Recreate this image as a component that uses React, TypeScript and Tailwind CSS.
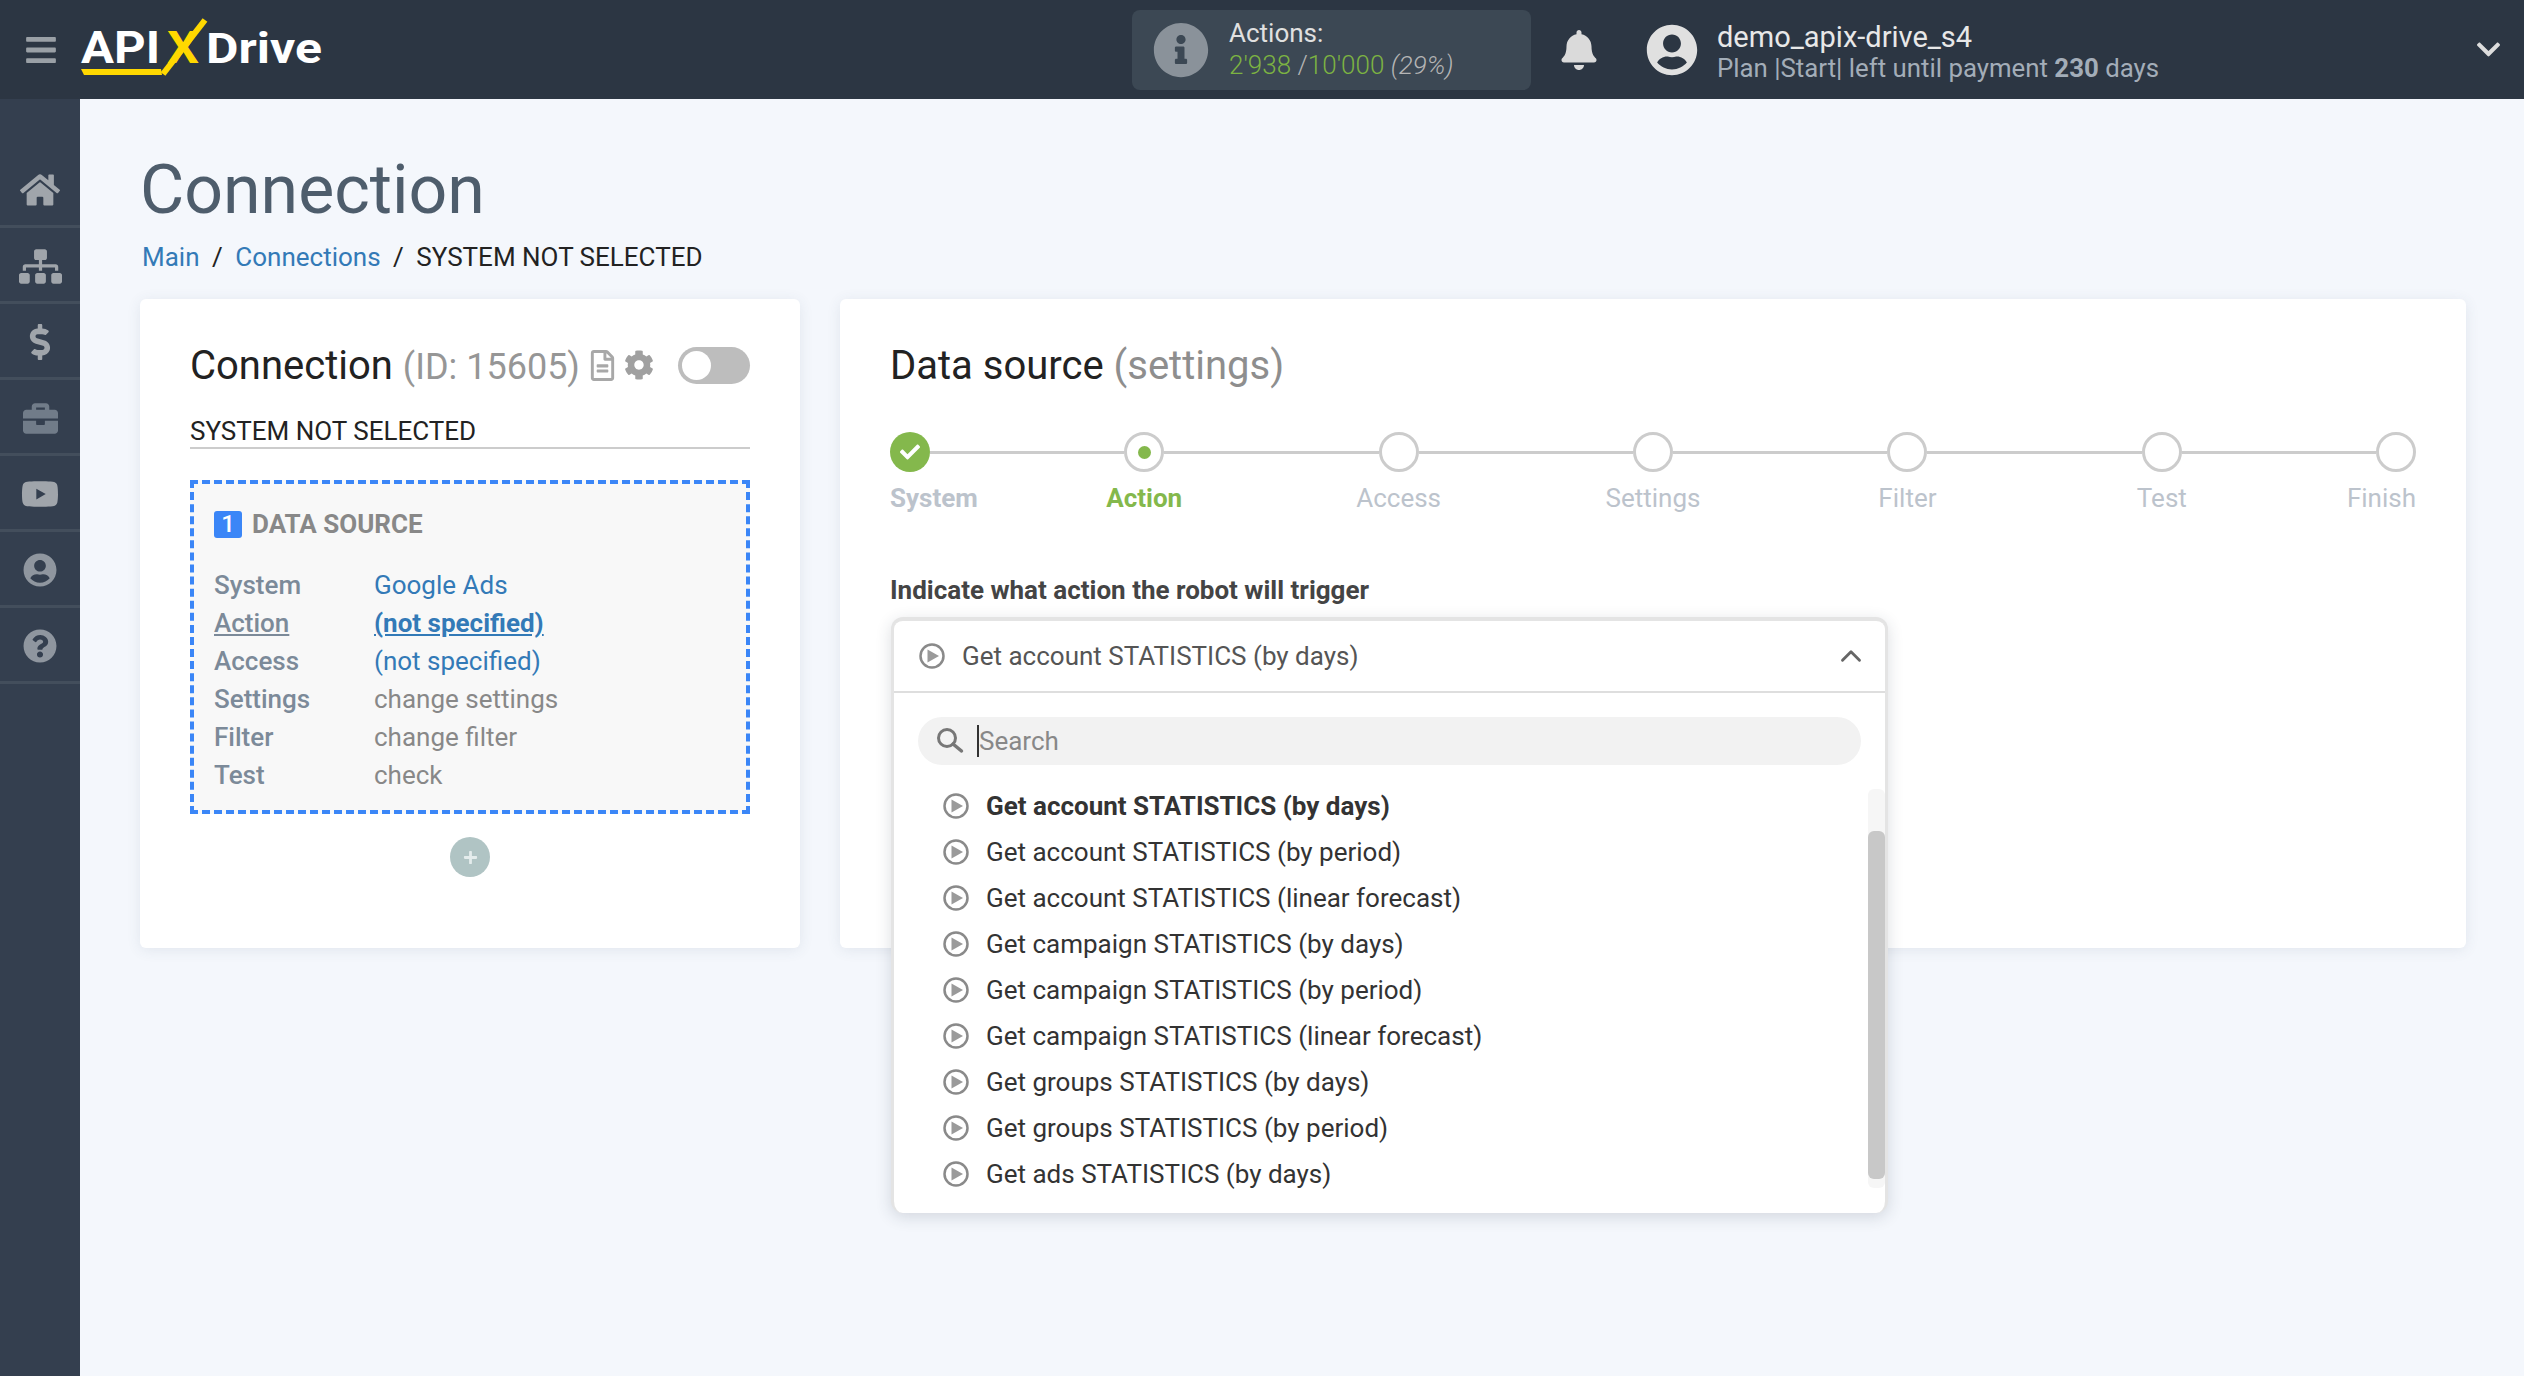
import React from "react";
import {
  FaBars,
  FaBell,
  FaBriefcase,
  FaCheck,
  FaChevronDown,
  FaCog,
  FaDollarSign,
  FaHome,
  FaInfoCircle,
  FaPlus,
  FaQuestionCircle,
  FaRegFileAlt,
  FaSitemap,
  FaUserCircle,
  FaYoutube,
} from "react-icons/fa";
import { ChevronUp } from "lucide-react";

const NAV_ITEMS = [
  { icon: FaHome, size: 40, color: "text-[#a0a5ab]" },
  { icon: FaSitemap, size: 43, color: "text-[#a0a5ab]" },
  { icon: FaDollarSign, size: 36, color: "text-[#a0a5ab]" },
  { icon: FaBriefcase, size: 35, color: "text-[#717c89]" },
  { icon: FaYoutube, size: 38, color: "text-[#a0a5ab]" },
  { icon: FaUserCircle, size: 34, color: "text-[#8f969f]" },
  { icon: FaQuestionCircle, size: 34, color: "text-[#8f969f]" },
];

const STEPS = ["System", "Action", "Access", "Settings", "Filter", "Test", "Finish"];

const SOURCE_ROWS = [
  { label: "System", value: "Google Ads", labelClass: "", valueClass: "text-[#337ab7]" },
  { label: "Action", value: "(not specified)", labelClass: "underline", valueClass: "text-[#337ab7] font-bold underline" },
  { label: "Access", value: "(not specified)", labelClass: "", valueClass: "text-[#337ab7]" },
  { label: "Settings", value: "change settings", labelClass: "", valueClass: "text-[#888888]" },
  { label: "Filter", value: "change filter", labelClass: "", valueClass: "text-[#888888]" },
  { label: "Test", value: "check", labelClass: "", valueClass: "text-[#888888]" },
];

const ACTIONS = [
  "Get account STATISTICS (by days)",
  "Get account STATISTICS (by period)",
  "Get account STATISTICS (linear forecast)",
  "Get campaign STATISTICS (by days)",
  "Get campaign STATISTICS (by period)",
  "Get campaign STATISTICS (linear forecast)",
  "Get groups STATISTICS (by days)",
  "Get groups STATISTICS (by period)",
  "Get ads STATISTICS (by days)",
];

const Logo = () => (
  <svg width="250" height="64" viewBox="0 0 250 64" className="font-['Roboto',sans-serif]">
    <text x="1" y="45" fontSize="44" fontWeight="700" fill="#ffffff" textLength="79" lengthAdjust="spacingAndGlyphs">
      API
    </text>
    <text x="87" y="45" fontSize="44" fontWeight="700" fill="#ffd800" textLength="32" lengthAdjust="spacingAndGlyphs">
      X
    </text>
    <line x1="83" y1="56" x2="125" y2="2" stroke="#ffd800" strokeWidth="6" />
    <polygon points="1,51 81,51 82,57 4,57" fill="#ffd800" />
    <text x="126" y="45" fontSize="42" fontWeight="700" fill="#ffffff" textLength="116" lengthAdjust="spacingAndGlyphs">
      Drive
    </text>
  </svg>
);

const PlayIcon = () => (
  <svg width="26" height="26" viewBox="0 0 26 26" className="shrink-0">
    <circle cx="13" cy="13" r="11.5" fill="none" stroke="#8a8a8a" strokeWidth="2.5" />
    <polygon points="8.5,6.5 20,13 8.5,19.5" fill="#9a9a9a" />
  </svg>
);

const SearchIcon = () => (
  <svg width="28" height="28" viewBox="0 0 28 28" className="shrink-0">
    <circle cx="11" cy="11" r="8.5" fill="none" stroke="#777777" strokeWidth="3" />
    <line x1="17" y1="17" x2="25.5" y2="24" stroke="#777777" strokeWidth="3.5" strokeLinecap="round" />
  </svg>
);

const Header = () => (
  <header className="h-[99px] shrink-0 bg-[#2c3643] flex items-center">
    <FaBars size={34} className="ml-[24px] text-[#9aa0a6]" />
    <div className="ml-[22px]">
      <Logo />
    </div>
    <div className="ml-[802px] h-[80px] w-[399px] rounded-lg bg-[#3c4854] flex items-center pl-[21px]">
      <FaInfoCircle size={56} className="text-[#8a929a]" />
      <div className="ml-[20px] -mt-[2px]">
        <div className="text-[26px] leading-[32px] text-[#e0e0e0]">Actions:</div>
        <div className="text-[26px] leading-[32px] font-light text-[#b5b5b5]">
          <span className="text-[#7cb342]">2'938</span> /<span className="text-[#7cb342]">10'000</span>{" "}
          <span className="italic">(29%)</span>
        </div>
      </div>
    </div>
    <FaBell size={40} className="ml-[28px] text-[#dadada]" />
    <FaUserCircle size={52} className="ml-[47px] text-[#e0e0e0]" />
    <div className="ml-[19px] mt-[5px]">
      <div className="text-[29px] leading-[32px] text-[#e8e8e8]">demo_apix-drive_s4</div>
      <div className="text-[25.8px] leading-[31px] text-[#a3adb8]">
        Plan |Start| left until payment <span className="font-bold">230</span> days
      </div>
    </div>
    <FaChevronDown size={27} className="ml-auto mr-[22px] text-[#dddddd]" />
  </header>
);

const Sidebar = () => (
  <nav className="w-[80px] shrink-0 bg-[#343f4f] pt-[53px]">
    {NAV_ITEMS.map(({ icon: Icon, size, color }, i) => (
      <div key={i} className="h-[76px] pt-[3px] flex items-center justify-center border-b-[3px] border-[#434e5c]">
        <Icon size={size} className={color} />
      </div>
    ))}
  </nav>
);

const SourceCard = () => (
  <section className="w-[660px] h-[649px] shrink-0 bg-white rounded-md shadow-[0_2px_14px_rgba(60,80,110,0.1)] pt-[42px] px-[50px]">
    <div className="flex items-center h-[48px]">
      <h2 className="mt-[2px] text-[40px] leading-[48px] text-[#222222]">
        Connection <span className="text-[36px] text-[#969696]">(ID: 15605)</span>
      </h2>
      <FaRegFileAlt size={31} className="ml-[7px] text-[#a8a8a8]" />
      <FaCog size={30} className="ml-[6px] text-[#a0a0a0]" />
      <div className="ml-auto h-[37px] w-[72px] rounded-full bg-[#bdbdbd] p-[4px]">
        <div className="h-[29px] w-[29px] rounded-full bg-white" />
      </div>
    </div>
    <div className="h-[60px] pt-[27px] border-b-2 border-[#cccccc] text-[26px] leading-[30px] text-[#222222]">
      SYSTEM NOT SELECTED
    </div>
    <div className="mt-[31px] h-[334px] border-4 border-dashed border-[#3b86f7] bg-[#f8f8f8] pt-[27px] pl-[20px]">
      <div className="flex items-center h-[27px]">
        <span className="h-[27px] w-[28px] rounded-[3px] bg-[#3b86f7] text-white text-[24px] leading-[27px] font-medium text-center">
          1
        </span>
        <span className="ml-[10px] text-[26px] font-bold text-[#888888]">DATA SOURCE</span>
      </div>
      <div className="mt-[28px]">
        {SOURCE_ROWS.map((row) => (
          <div key={row.label} className="flex h-[38px] items-center text-[26px] leading-[38px]">
            <span className={`w-[160px] font-medium text-[#7c8a99] ${row.labelClass}`}>{row.label}</span>
            <span className={row.valueClass}>{row.value}</span>
          </div>
        ))}
      </div>
    </div>
    <div className="mt-[23px] mx-auto h-[40px] w-[40px] rounded-full bg-[#b0c4c4] flex items-center justify-center">
      <FaPlus size={15} className="text-[#e4ecec]" />
    </div>
  </section>
);

const Stepper = () => (
  <div className="flex w-[1526px]">
    {STEPS.map((step, i) => {
      const isFirst = i === 0;
      const isLast = i === STEPS.length - 1;
      return (
        <div
          key={step}
          className={`flex flex-col ${isFirst || isLast ? "w-[127px]" : "flex-1"} ${
            isFirst ? "items-start" : isLast ? "items-end" : "items-center"
          }`}
        >
          <div className="flex items-center w-full h-[40px]">
            {!isFirst && <div className="flex-1 h-[3px] bg-[#cccccc]" />}
            {i === 0 ? (
              <div className="h-[40px] w-[40px] rounded-full bg-[#84b84c] flex items-center justify-center">
                <FaCheck size={20} className="text-white" />
              </div>
            ) : (
              <div className="h-[40px] w-[40px] rounded-full border-[3px] border-[#cccccc] flex items-center justify-center">
                {i === 1 && <div className="h-[13px] w-[13px] rounded-full bg-[#84b84c]" />}
              </div>
            )}
            {!isLast && <div className="flex-1 h-[3px] bg-[#cccccc]" />}
          </div>
          <div
            className={`mt-[11px] text-[26px] leading-[30px] ${
              i === 1 ? "font-bold text-[#84b84c]" : i === 0 ? "font-bold text-[#bcc3cc]" : "text-[#bcc3cc]"
            }`}
          >
            {step}
          </div>
        </div>
      );
    })}
  </div>
);

const ActionDropdown = () => (
  <div className="relative mt-[12px] h-[596px]">
    <div className="absolute left-[1px] top-0 w-[997px] h-[596px] bg-white rounded-xl border-x-[3px] border-t-4 border-[#e4e4e4] shadow-[0_4px_16px_rgba(40,50,70,0.16)]">
      <div className="h-[72px] flex items-center pl-[25px] pr-[17px] border-b-2 border-[#dedede]">
        <PlayIcon />
        <span className="ml-[17px] text-[26px] text-[#555555]">Get account STATISTICS (by days)</span>
        <ChevronUp size={34} strokeWidth={2} className="ml-auto text-[#666666]" />
      </div>
      <div className="mt-[24px] mx-[24px] h-[48px] rounded-full bg-[#f2f2f2] flex items-center pl-[18px]">
        <SearchIcon />
        <span className="ml-[13px] h-[32px] border-l-2 border-[#333333] text-[26px] leading-[32px] text-[#888888]">
          Search
        </span>
      </div>
      <div className="mt-[18px] flex">
        <div className="flex-1 pl-[49px]">
          {ACTIONS.map((action, i) => (
            <div key={action} className="h-[46px] flex items-center gap-[17px]">
              <PlayIcon />
              <span className={`text-[26px] text-[#333333] ${i === 0 ? "font-bold text-[#222222]" : ""}`}>
                {action}
              </span>
            </div>
          ))}
        </div>
        <div className="w-[17px] h-[399px] mt-[6px] rounded-md bg-[#f6f6f6] pt-[42px]">
          <div className="h-[348px] rounded-md bg-[#c8c8c8]" />
        </div>
      </div>
    </div>
  </div>
);

const SettingsCard = () => (
  <section className="flex-1 h-[649px] bg-white rounded-md shadow-[0_2px_14px_rgba(60,80,110,0.1)] pt-[43px] pl-[50px]">
    <h2 className="text-[40px] leading-[48px] text-[#222222]">
      Data source <span className="text-[40px] text-[#8e8e8e]">(settings)</span>
    </h2>
    <div className="mt-[42px]">
      <Stepper />
    </div>
    <div className="mt-[62px] text-[26px] leading-[30px] font-bold text-[#444444]">
      Indicate what action the robot will trigger
    </div>
    <ActionDropdown />
  </section>
);

export default function App() {
  return (
    <div className="h-screen w-full flex flex-col overflow-hidden bg-[#f4f7fc] font-['Roboto',sans-serif]">
      <Header />
      <div className="flex flex-1">
        <Sidebar />
        <main className="flex-1 pl-[60px] pr-[58px]">
          <h1 className="mt-[56px] text-[68px] leading-[70px] text-[#4e5d6c]">Connection</h1>
          <div className="mt-[16px] pl-[2px] text-[26px] leading-[32px] text-[#222222]">
            <span className="text-[#337ab7]">Main</span>
            <span className="mx-[12.5px]">/</span>
            <span className="text-[#337ab7]">Connections</span>
            <span className="mx-[12.5px]">/</span>
            SYSTEM NOT SELECTED
          </div>
          <div className="mt-[26px] flex gap-[40px]">
            <SourceCard />
            <SettingsCard />
          </div>
        </main>
      </div>
    </div>
  );
}
